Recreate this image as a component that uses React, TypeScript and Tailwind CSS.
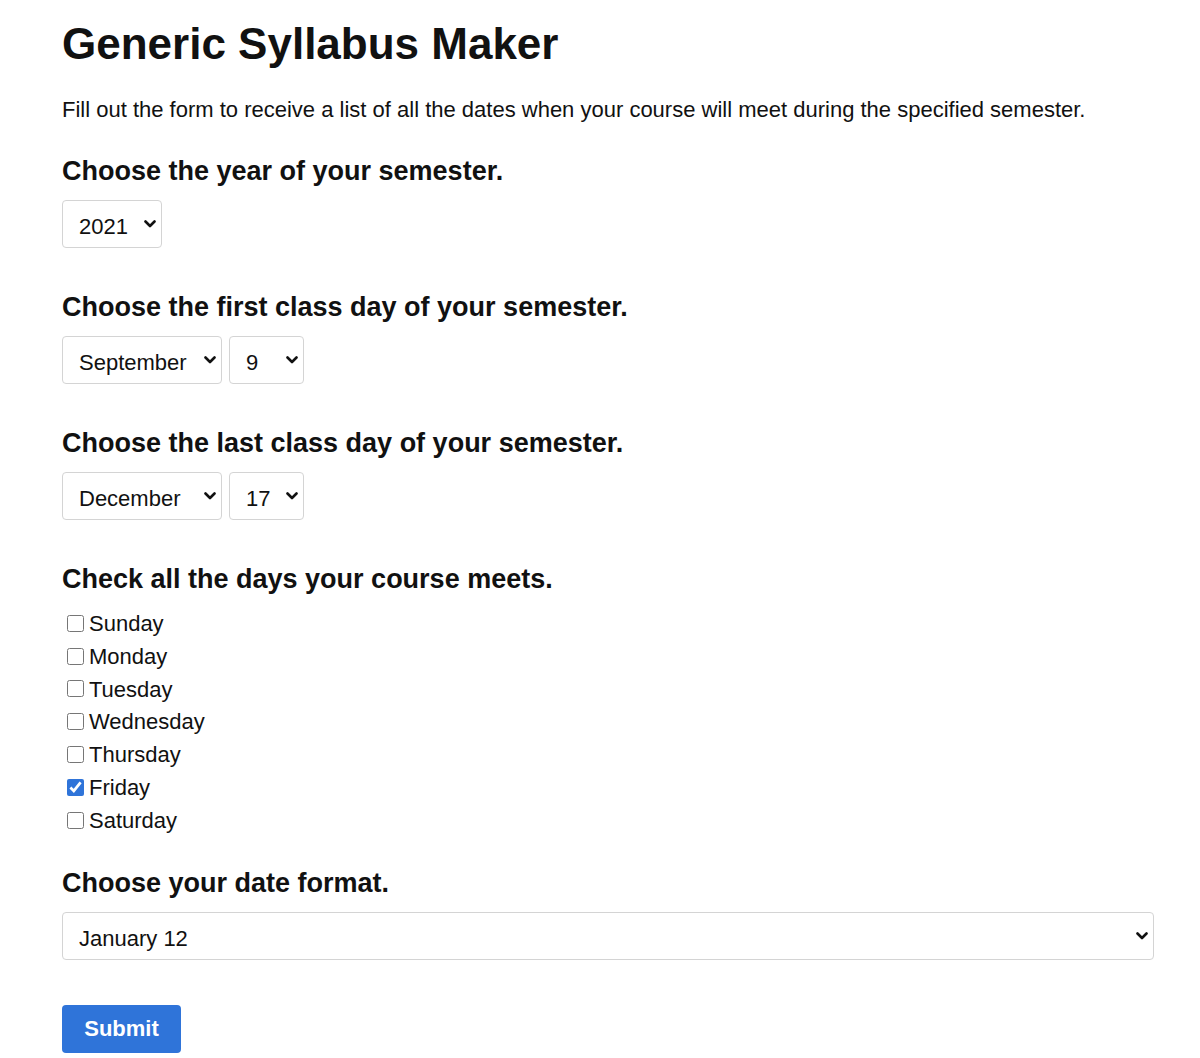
import React, { useState } from "react";

const MONTHS = [
  "January",
  "February",
  "March",
  "April",
  "May",
  "June",
  "July",
  "August",
  "September",
  "October",
  "November",
  "December",
];

const DAYS = ["Sunday", "Monday", "Tuesday", "Wednesday", "Thursday", "Friday", "Saturday"];

const Chevron = () => (
  <svg
    className="pointer-events-none absolute right-[6px] top-1/2 -translate-y-1/2"
    width="12"
    height="8"
    viewBox="0 0 12 8"
    fill="none"
  >
    <path d="M1.5 1.5 6 6l4.5-4.5" stroke="#111" strokeWidth="2.6" strokeLinecap="round" strokeLinejoin="round" />
  </svg>
);

type SelectProps = {
  value: string;
  options: string[];
  onChange: (v: string) => void;
  className?: string;
};

const Select = ({ value, options, onChange, className = "" }: SelectProps) => (
  <div className={`relative ${className}`}>
    <select
      value={value}
      onChange={(e) => onChange(e.target.value)}
      className="h-12 w-full appearance-none rounded-[4px] border border-[#d4d4d4] bg-white pl-4 pr-[26px] pt-[5px] text-[22px] text-[#111] outline-none"
    >
      {options.map((o) => (
        <option key={o}>{o}</option>
      ))}
    </select>
    <Chevron />
  </div>
);

const Heading = ({ children, className = "" }: { children: React.ReactNode; className?: string }) => (
  <h3 className={`text-[27px] font-bold leading-[34px] text-[#111] ${className}`}>{children}</h3>
);

export default function App() {
  const [year, setYear] = useState("2021");
  const [startMonth, setStartMonth] = useState("September");
  const [startDay, setStartDay] = useState("9");
  const [endMonth, setEndMonth] = useState("December");
  const [endDay, setEndDay] = useState("17");
  const [days, setDays] = useState<string[]>(["Friday"]);
  const [format, setFormat] = useState("January 12");

  const dayNums = Array.from({ length: 31 }, (_, i) => String(i + 1));

  const toggle = (d: string) =>
    setDays((prev) => (prev.includes(d) ? prev.filter((x) => x !== d) : [...prev, d]));

  return (
    <div className="min-h-screen bg-white font-['Liberation_Sans',Arial,sans-serif] text-[#111]">
      <div className="w-[1154px] pl-[62px] pt-[18px]">
        <h1 className="text-[44px] font-bold leading-[52px]">Generic Syllabus Maker</h1>
        <p className="mt-[28px] text-[22px] leading-[24px]">
          Fill out the form to receive a list of all the dates when your course will meet during the specified semester.
        </p>

        <form className="mt-[32px]" onSubmit={(e) => e.preventDefault()}>
          <Heading>Choose the year of your semester.</Heading>
          <Select
            className="mt-[12px] w-[100px]"
            value={year}
            options={["2020", "2021", "2022", "2023"]}
            onChange={setYear}
          />

          <Heading className="mt-[42px]">Choose the first class day of your semester.</Heading>
          <div className="mt-[12px] flex gap-[7px]">
            <Select className="w-[160px]" value={startMonth} options={MONTHS} onChange={setStartMonth} />
            <Select className="w-[75px]" value={startDay} options={dayNums} onChange={setStartDay} />
          </div>

          <Heading className="mt-[42px]">Choose the last class day of your semester.</Heading>
          <div className="mt-[12px] flex gap-[7px]">
            <Select className="w-[160px]" value={endMonth} options={MONTHS} onChange={setEndMonth} />
            <Select className="w-[75px]" value={endDay} options={dayNums} onChange={setEndDay} />
          </div>

          <Heading className="mt-[42px]">Check all the days your course meets.</Heading>
          <div className="mt-[11px] flex flex-col">
            {DAYS.map((d) => (
              <label key={d} className="flex h-[32.8px] items-center text-[22px]">
                <input
                  type="checkbox"
                  checked={days.includes(d)}
                  onChange={() => toggle(d)}
                  className="ml-[5px] mr-[5px] h-[17px] w-[17px] accent-[#2f74d9]"
                />
                {d}
              </label>
            ))}
          </div>

          <Heading className="mt-[29px]">Choose your date format.</Heading>
          <Select
            className="mt-[12px] w-full"
            value={format}
            options={["January 12", "Jan 12", "1/12", "12 January"]}
            onChange={setFormat}
          />

          <button
            type="submit"
            className="mt-[45px] h-12 w-[119px] rounded-[4px] bg-[#2f74d9] text-[22px] font-bold text-white"
          >
            Submit
          </button>
        </form>
      </div>
    </div>
  );
}
